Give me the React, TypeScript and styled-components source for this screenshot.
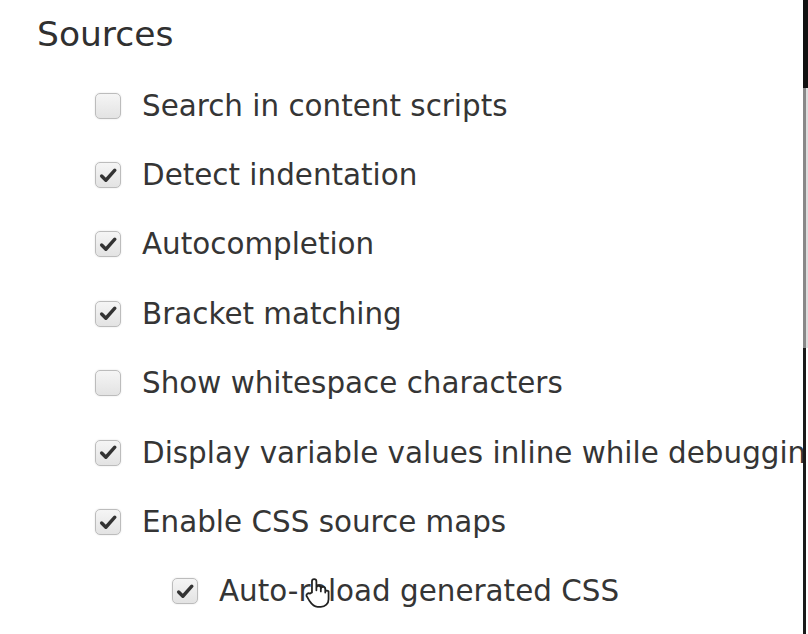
import React from "react";
import styled, { createGlobalStyle } from "styled-components";

const GlobalStyle = createGlobalStyle`
  html, body { margin: 0; padding: 0; background: #fff; }
  body { width: 808px; height: 634px; overflow: hidden; }
`;

const Frame = styled.div`
  display: flex;
  width: 808px;
  height: 634px;
  background: #fff;
`;

const Panel = styled.div`
  flex: 1;
  min-width: 0;
  overflow: hidden;
  padding: 12px 0 0 37px;
  font-family: "DejaVu Sans", sans-serif;
  color: #333;
  white-space: nowrap;
`;

const Heading = styled.h2`
  margin: 0;
  font-weight: normal;
  font-size: 34.5px;
  line-height: 44px;
  color: #303030;
`;

const List = styled.div`
  display: flex;
  flex-direction: column;
  padding-left: 58px;
  margin-top: 15px;
`;

const Row = styled.label<{ $indent?: boolean }>`
  position: relative;
  display: flex;
  align-items: center;
  gap: 21px;
  height: 69.4px;
  padding-left: ${(p) => (p.$indent ? 77 : 0)}px;
  font-size: 29.4px;
  color: #353535;
`;

const Box = styled.span<{ $checked: boolean }>`
  flex: none;
  width: 26px;
  height: 26px;
  box-sizing: border-box;
  border: 1.5px solid #bcbcbc;
  border-radius: 5px;
  background: linear-gradient(#f5f5f5, #e3e3e3);
  box-shadow: 0 0 2px rgba(0, 0, 0, 0.12);
  display: flex;
  align-items: center;
  justify-content: center;
`;

const Cursor = styled.svg`
  position: absolute;
  left: 209px;
  top: 20px;
`;

const Edge = styled.div`
  flex: none;
  width: 5px;
  display: flex;
  flex-direction: column;
`;

const EdgeSeg = styled.div<{ $h: string; $bg: string }>`
  height: ${(p) => p.$h};
  background: ${(p) => p.$bg};
`;

const Check = () => (
  <svg width="19" height="17" viewBox="0 0 18 16">
    <path
      d="M2.5 8.5 L6.5 12.5 L15 3"
      fill="none"
      stroke="#333"
      strokeWidth="3.2"
      strokeLinecap="round"
      strokeLinejoin="round"
    />
  </svg>
);

const items: { label: string; checked: boolean; indent?: boolean }[] = [
  { label: "Search in content scripts", checked: false },
  { label: "Detect indentation", checked: true },
  { label: "Autocompletion", checked: true },
  { label: "Bracket matching", checked: true },
  { label: "Show whitespace characters", checked: false },
  { label: "Display variable values inline while debugging", checked: true },
  { label: "Enable CSS source maps", checked: true },
  { label: "Auto-reload generated CSS", checked: true, indent: true },
];

export default function App() {
  return (
    <>
      <GlobalStyle />
      <Frame>
        <Panel>
          <Heading>Sources</Heading>
          <List>
            {items.map((it) => (
              <Row key={it.label} $indent={it.indent}>
                <Box $checked={it.checked}>{it.checked && <Check />}</Box>
                <span>{it.label}</span>
                {it.indent && (
                  <Cursor width="27" height="31" viewBox="0 0 24 28">
                    <path
                      d="M7 14 V4 a2 2 0 0 1 4 0 V12 V10 a2 2 0 0 1 4 0 V13 V11 a2 2 0 0 1 4 0 V14 V13 a2 2 0 0 1 3 0 V20 c0 4 -3 7 -7 7 h-3 c-3 0 -5 -2 -7 -5 l-3 -5 a2 2 0 0 1 3 -2 z"
                      fill="#fff"
                      stroke="#222"
                      strokeWidth="1.6"
                      strokeLinejoin="round"
                    />
                  </Cursor>
                )}
              </Row>
            ))}
          </List>
        </Panel>
        <Edge>
          <EdgeSeg $h="88px" $bg="#111" />
          <EdgeSeg $h="260px" $bg="linear-gradient(90deg,#888 0 60%,#ddd 60%)" />
          <EdgeSeg $h="286px" $bg="linear-gradient(90deg,#1a1a1a 0 60%,#fff 60%)" />
        </Edge>
      </Frame>
    </>
  );
}
